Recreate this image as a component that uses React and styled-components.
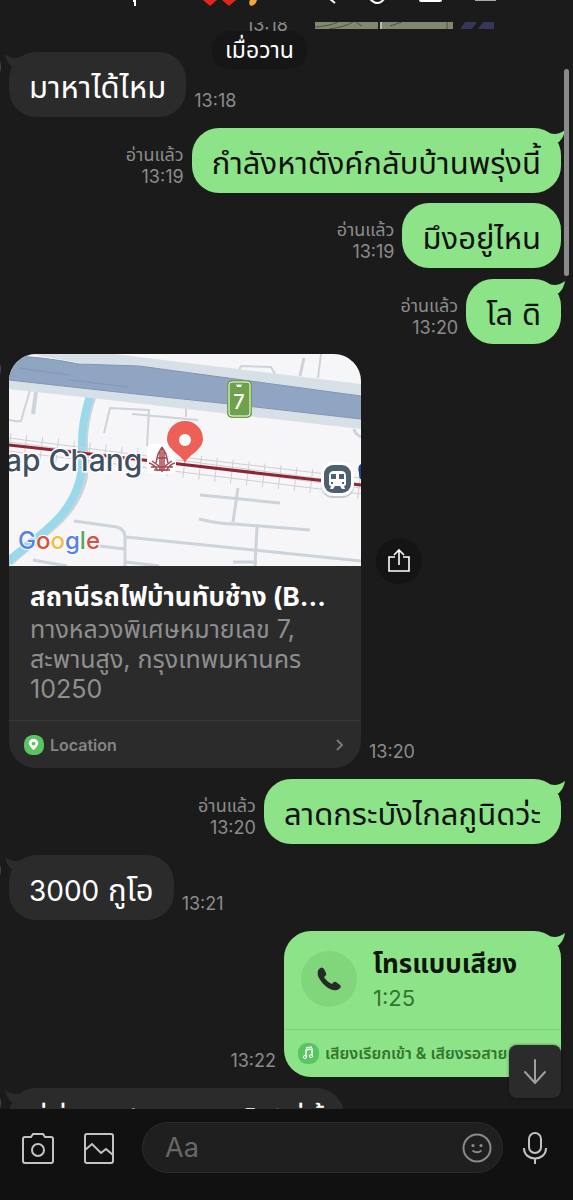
import styled, { createGlobalStyle } from "styled-components";

const GlobalStyle = createGlobalStyle`
  * {
    box-sizing: border-box;
  }
  body {
    margin: 0;
    background-color: #1b1b1b;
    font-family: Inter, "Noto Sans Thai", "Noto Sans", sans-serif;
  }
  button {
    border: none;
    padding: 0;
    background: none;
    color: inherit;
    font: inherit;
    cursor: pointer;
  }
`;

const Screen = styled.div`
  position: relative;
  display: flex;
  flex-direction: column;
  height: 100vh;
  overflow: hidden;
  background-color: #1b1b1b;
`;

const Header = styled.header`
  display: flex;
  align-items: flex-start;
  justify-content: space-between;
  height: 22px;
  padding: 0 76px 0 129px;
  background-color: #1b1b1b;
`;

const HeaderGroup = styled.div`
  display: flex;
  gap: ${(props) => props.$gap}px;
`;

const HeaderButton = styled.button`
  display: flex;
  height: 8px;
`;

const Chat = styled.main`
  flex: 1;
  overflow: hidden;
`;

const PastRow = styled.div`
  display: flex;
  justify-content: flex-end;
  gap: 27px;
  height: 19px;
  padding-right: 79px;
`;

const PastTime = styled.time`
  height: 12px;
  overflow: hidden;
  color: #8c8c8c;
  font-size: 18px;
  line-height: 6px;
`;

const DateChip = styled.div`
  position: absolute;
  top: 31px;
  left: 50%;
  transform: translateX(-50%);
  padding: 0 14px;
  margin-left: -27px;
  border-radius: 19px;
  background-color: #161616;
  color: #fff;
  font-size: 23px;
  line-height: 38px;
`;

const Row = styled.div`
  position: relative;
  display: flex;
  flex-direction: ${(props) => (props.$mine ? "row-reverse" : "row")};
  align-items: flex-end;
  gap: 8px;
  margin-top: ${(props) => (props.$tail ? 11 : 10)}px;
  padding: 0 12px 0 9px;
`;

const Avatar = styled.div`
  position: absolute;
  top: 0;
  left: -29px;
  width: 30px;
  height: 30px;
  border-radius: 50%;
  background-color: #41454f;
`;

const Bubble = styled.p`
  position: relative;
  flex: none;
  margin: 0;
  padding: 5px 20px 0;
  border-radius: 27px;
  background-color: ${(props) => (props.$mine ? "#8de387" : "#2b2b2b")};
  color: ${(props) => (props.$mine ? "#111" : "#fff")};
  font-size: 31px;
  line-height: 60px;
  white-space: nowrap;
`;

const Digits = styled.span`
  font-size: 28px;
  line-height: 1;
`;

const TailSvg = styled.svg`
  position: absolute;
  top: 1px;
  ${(props) => (props.$mine ? "right: -5px;" : "left: -5px;")}
  transform: ${(props) => (props.$mine ? "none" : "scaleX(-1)")};
`;

const Meta = styled.div`
  display: flex;
  flex-direction: column;
  align-items: ${(props) => (props.$mine ? "flex-end" : "flex-start")};
  padding-bottom: 5px;
  color: #8c8c8c;
  font-size: 18px;
  line-height: 22px;
`;

const LocationCard = styled.article`
  width: 352px;
  overflow: hidden;
  border-radius: 27px;
  background-color: #2b2b2b;
`;

const MapSvg = styled.svg`
  display: block;
  width: 100%;
  height: 212px;
`;

const LocationBody = styled.div`
  height: 154px;
  padding: 14px 21px 0;
`;

const LocationTitle = styled.h2`
  margin: 0;
  overflow: hidden;
  color: #fff;
  font-size: 26px;
  font-weight: 700;
  line-height: 34px;
  white-space: nowrap;
`;

const LocationText = styled.p`
  margin: 0;
  color: #8f8f8f;
  font-size: 25px;
  line-height: 30px;
`;

const LocationLink = styled.a`
  display: flex;
  align-items: center;
  gap: 6px;
  height: 48px;
  padding: 0 15px;
  border-top: 1px solid #383838;
  color: #858585;
  font-size: 16px;
  font-weight: 600;
  text-decoration: none;
`;

const LinkLabel = styled.span`
  flex: 1;
`;

const ShareButton = styled.button`
  display: flex;
  align-items: center;
  justify-content: center;
  width: 46px;
  height: 46px;
  margin-left: 7px;
  border-radius: 50%;
  background-color: #141414;
`;

const LocationSide = styled.div`
  display: flex;
  flex-direction: column;
  justify-content: space-between;
  align-self: stretch;
  padding-top: 184px;
`;

const CallCard = styled.article`
  position: relative;
  width: 277px;
  border-radius: 27px;
  background-color: #8de387;
`;

const CallBody = styled.div`
  display: flex;
  align-items: flex-start;
  gap: 16px;
  height: 98px;
  padding: 15px 17px 0;
`;

const CallIcon = styled.div`
  display: flex;
  align-items: center;
  justify-content: center;
  width: 56px;
  height: 56px;
  margin-top: 5px;
  border-radius: 50%;
  background-color: #81d67b;
`;

const CallTitle = styled.h2`
  margin: 0;
  color: #0d150c;
  font-size: 26px;
  font-weight: 700;
  line-height: 36px;
`;

const CallLength = styled.p`
  margin: 0;
  color: #33752e;
  font-size: 22px;
  line-height: 32px;
`;

const CallFooter = styled.a`
  display: flex;
  align-items: center;
  gap: 6px;
  height: 48px;
  padding-left: 14px;
  border-top: 1px solid #80d27a;
  color: #33752e;
  font-size: 16px;
  font-weight: 600;
  text-decoration: none;
  white-space: nowrap;
`;

const ScrollThumb = styled.div`
  position: absolute;
  top: 69px;
  right: 4px;
  width: 5px;
  height: 207px;
  border-radius: 3px;
  background-color: #8a8a8a;
`;

const DownButton = styled.button`
  position: absolute;
  right: 12px;
  bottom: 102px;
  display: flex;
  align-items: center;
  justify-content: center;
  width: 52px;
  height: 53px;
  border-radius: 8px;
  background-color: #2b2b2b;
  box-shadow: 0 0 3px rgba(0, 0, 0, 0.5);
`;

const Composer = styled.form`
  display: flex;
  align-items: flex-start;
  height: 91px;
  padding: 13px 25px 0 22px;
  background-color: #111;
`;

const ComposerButton = styled.button`
  display: flex;
  flex: none;
  align-items: center;
  height: 51px;
  margin-right: ${(props) => props.$space || 0}px;
`;

const InputBox = styled.div`
  display: flex;
  flex: 1;
  align-items: center;
  min-width: 0;
  height: 51px;
  margin-right: 19px;
  padding: 0 10px 0 22px;
  border: 1px solid #2c2c2c;
  border-radius: 26px;
  background-color: #1f1f1f;
`;

const MessageInput = styled.input`
  flex: 1;
  min-width: 0;
  padding: 0;
  border: none;
  outline: none;
  background: none;
  color: #fff;
  font-family: inherit;
  font-size: 27px;
  &::placeholder {
    color: #686868;
    opacity: 1;
  }
`;

const Tail = ({ mine }) => (
  <TailSvg $mine={mine} width="24" height="22" viewBox="0 0 24 22">
    <path
      d="M5 3 Q14 8 23 1 Q22 8 17 13 L10 16 Z"
      fill={mine ? "#8de387" : "#2b2b2b"}
    />
  </TailSvg>
);

const Message = ({ mine, tail, read, time, children }) => (
  <Row $mine={mine} $tail={tail}>
    {!mine && <Avatar />}
    <Bubble $mine={mine}>
      {children}
      {tail && <Tail mine={mine} />}
    </Bubble>
    {time && (
      <Meta $mine={mine}>
        {read && <span>อ่านแล้ว</span>}
        <time>{time}</time>
      </Meta>
    )}
  </Row>
);

const LocationMap = () => (
  <MapSvg viewBox="0 0 352 212" preserveAspectRatio="xMidYMid slice">
    <rect width="352" height="212" fill="#f6f5f7" />
    <g fill="none" stroke="#cdd3db" strokeWidth="3" strokeLinejoin="round">
      <path d="M21 36 L12 67 Q10 68 0 66" strokeWidth="2" />
      <path d="M27 38 L24 60" strokeWidth="4" />
      <path d="M95 79 L101 54 L140 56 L138 92 M123 60 L189 66 M177 53 V63" strokeWidth="2" />
      <path d="M230 16 L232 12 L262 13 L266 20 M312 0 L309 24" strokeWidth="2" />
      <path d="M295 4 L291 22" />
      <path d="M345 75 Q346 80 352 83" />
      <path d="M191 141 L271 149 M229 134 L224 168 M190 165 Q210 170 225 170 L301 176" />
      <path d="M65 167 L108 173 Q116 175 116 184 V212 M117 183 L352 207 M90 192 L116 195" />
      <path d="M248 173 L246 212 M224 208 H248 M24 206 L58 212 M117 208 L150 212" />
    </g>
    <path
      d="M86 0 L83 42 C68 86 78 100 74 125 C64 165 30 180 0 208"
      fill="none"
      stroke="#cdd3db"
      strokeWidth="9"
    />
    <path
      d="M86 0 L81 42 C67 86 77 100 71 125 C61 165 30 180 -4 210"
      fill="none"
      stroke="#99d9ea"
      strokeWidth="8"
    />
    <path d="M20 0 H105 L352 30 V44 L140 20 L60 7 Z" fill="#d8e0e7" />
    <path d="M0 25 L100 37 L352 64 V75 L100 46 L0 35 Z" fill="#d8e0e7" />
    <path
      d="M0 2 Q30 2 70 10 L130 12 L352 42 V65 L220 50 L90 36 L0 26 Z"
      fill="#90a5c1"
    />
    <path
      d="M0 2 Q30 2 70 10 L130 12 L352 42 M0 26 L90 36 L220 50 L352 65 M10 14 L60 21 M60 26 L120 33"
      fill="none"
      stroke="#7e97b7"
    />
    <g fill="none" stroke="#cfcfd3">
      <path d="M0 84 L352 130 M0 88 L352 134 M0 97 L352 140 M180 104 L352 124" />
      <path
        d="M0 91 L352 133"
        strokeWidth="24"
        strokeDasharray="1 15"
      />
    </g>
    <path d="M0 91 L170 110 L352 131" fill="none" stroke="#8d2532" strokeWidth="3" />
    <text
      x="-4"
      y="117"
      fill="#3f5161"
      stroke="#fff"
      strokeWidth="3"
      paintOrder="stroke"
      fontFamily="Inter"
      fontSize="30"
      fontWeight="500"
    >
      ap Chang
    </text>
    <rect x="138" y="90" width="29" height="30" rx="5" fill="#fff" />
    <g fill="none" stroke="#a5474c" strokeWidth="1.5">
      <path d="M153 93 L149 100 L147 109 M153 93 L157 100 L159 109 M151 97 V117 M155 97 V117 M153 94 V118 M149 104 H157" />
      <path d="M140 109 Q145 110 149 117 M143 107 L150 112 M166 109 Q161 110 157 117 M163 107 L156 112 M142 113 H164 M145 116 H161" />
    </g>
    <path
      d="M176 109 C173 101 158 96 158 85 A18 18 0 0 1 194 85 C194 96 179 101 176 109 Z"
      fill="#ec6058"
    />
    <circle cx="176" cy="86" r="6" fill="#fff" />
    <rect x="218" y="26" width="25" height="38" rx="5" fill="#6fa04a" />
    <rect x="220" y="28" width="21" height="34" rx="3" fill="#6fa04a" stroke="#fff" />
    <path d="M227 30 L229 31 L230 30 L231 31 L233 30 L232 33 H228 Z" fill="#fff" />
    <text
      x="230"
      y="55"
      fill="#fff"
      fontFamily="Inter"
      fontSize="20"
      fontWeight="500"
      textAnchor="middle"
    >
      7
    </text>
    <rect x="312" y="109" width="33" height="35" rx="12" fill="#c7c9cd" />
    <rect x="312" y="108" width="33" height="34" rx="12" fill="#fff" />
    <rect x="315" y="111" width="27" height="28" rx="9" fill="#4c6073" />
    <path
      d="M320 122 Q320 117 325 117 H332 Q337 117 337 122 V130 Q337 132 335 132 L336 135 H333 L331 132 H326 L324 135 H321 L322 132 Q320 132 320 130 Z"
      fill="#fff"
    />
    <path
      d="M322 120 H327 V125 H322 Z M330 120 H335 V125 H330 Z M322 128 h2 v2 h-2 Z M333 128 h2 v2 h-2 Z"
      fill="#4c6073"
    />
    <path d="M352 110 Q348 112 350 119 Q350 125 352 125 Z" fill="#24408e" />
    <text
      x="9"
      y="195"
      stroke="#fff"
      strokeWidth="2"
      paintOrder="stroke"
      fontFamily="Inter"
      fontSize="24"
      fontWeight="500"
    >
      <tspan fill="#5383ec">G</tspan>
      <tspan fill="#d85140">o</tspan>
      <tspan fill="#f1be42">o</tspan>
      <tspan fill="#5383ec">g</tspan>
      <tspan fill="#58a65c">l</tspan>
      <tspan fill="#d85140">e</tspan>
    </text>
  </MapSvg>
);

const App = () => {
  return (
    <Screen>
      <GlobalStyle />
      <Header>
        <HeaderGroup $gap={49}>
          <svg width="24" height="8" viewBox="0 0 24 8">
            <path d="M4 1 H6 V6" fill="none" stroke="#fff" strokeWidth="2" />
          </svg>
          <svg width="60" height="8" viewBox="0 0 60 8">
            <path d="M1 0 H15 L8 6 Z M20 0 H34 L27 6 Z" fill="#e0261b" />
            <path d="M48 0 H55 Q54 5 49 6 Q46 4 48 0 Z" fill="#f0a63a" />
          </svg>
        </HeaderGroup>
        <HeaderGroup $gap={33}>
          <HeaderButton aria-label="ค้นหา">
            <svg width="14" height="8" viewBox="0 0 14 8">
              <path d="M7 -1 L12 3" stroke="#fff" strokeWidth="2" />
            </svg>
          </HeaderButton>
          <HeaderButton aria-label="โทร">
            <svg width="16" height="8" viewBox="0 0 16 8">
              <path d="M0 -1 Q8 7 14 -1" fill="none" stroke="#fff" strokeWidth="2" />
            </svg>
          </HeaderButton>
          <HeaderButton aria-label="โน้ต">
            <svg width="23" height="8" viewBox="0 0 23 8">
              <path d="M0 -4 H23 V0 Q23 2 21 2 H2 Q0 2 0 0 Z" fill="#fff" />
            </svg>
          </HeaderButton>
          <HeaderButton aria-label="เมนู">
            <svg width="22" height="8" viewBox="0 0 22 8">
              <path d="M0 0 H21" stroke="#aaa" strokeWidth="2" />
            </svg>
          </HeaderButton>
        </HeaderGroup>
      </Header>

      <Chat>
        <PastRow>
          <PastTime>13:18</PastTime>
          <svg width="179" height="7" viewBox="0 0 179 7">
            <rect width="138" height="7" fill="#7f8970" />
            <path
              d="M0 5 Q14 4 23 0 M14 7 Q30 5 38 0 M41 0 L47 4 M75 4 L87 0 M132 0 V7"
              fill="none"
              stroke="#4c543f"
            />
            <path d="M64 0 V7" stroke="#222" strokeWidth="2" />
            <path d="M66 0 V7" stroke="#eee" />
            <path d="M150 0 H162 L157 7 H145 Z M168 0 H179 V7 H163 Z" fill="#35365a" />
          </svg>
        </PastRow>

        <Message tail time="13:18">
          มาหาได้ไหม
        </Message>
        <Message mine tail read time="13:19">
          กำลังหาตังค์กลับบ้านพรุ่งนี้
        </Message>
        <Message mine read time="13:19">
          มึงอยู่ไหน
        </Message>
        <Message mine tail read time="13:20">
          โล ดิ
        </Message>

        <Row>
          <Avatar />
          <LocationCard>
            <LocationMap />
            <LocationBody>
              <LocationTitle>สถานีรถไฟบ้านทับช้าง (B...</LocationTitle>
              <LocationText>
                ทางหลวงพิเศษหมายเลข 7,
                <br />
                สะพานสูง, กรุงเทพมหานคร
                <br />
                10250
              </LocationText>
            </LocationBody>
            <LocationLink href="#location">
              <svg width="20" height="20" viewBox="0 0 21 21">
                <rect width="21" height="21" rx="9" fill="#59c561" />
                <path
                  d="M10 16 Q5 11 5 9 A5 5 0 0 1 15 9 Q15 11 10 16 Z"
                  fill="#fff"
                />
                <circle cx="10" cy="9" r="2" fill="#59c561" />
              </svg>
              <LinkLabel>Location</LinkLabel>
              <svg width="14" height="14" viewBox="0 0 14 14">
                <path
                  d="M5 2 L10 7 L5 12"
                  fill="none"
                  stroke="#777"
                  strokeWidth="2"
                />
              </svg>
            </LocationLink>
          </LocationCard>
          <LocationSide>
            <ShareButton aria-label="แชร์">
              <svg width="24" height="26" viewBox="0 0 24 26">
                <path
                  d="M8 9 H2 V23 H22 V9 H16 M12 17 V2 M7 7 L12 2 L17 7"
                  fill="none"
                  stroke="#fff"
                  strokeWidth="1.6"
                />
              </svg>
            </ShareButton>
            <Meta>
              <time>13:20</time>
            </Meta>
          </LocationSide>
        </Row>

        <Message mine tail read time="13:20">
          ลาดกระบังไกลกูนิดว่ะ
        </Message>
        <Message tail time="13:21">
          <Digits>3000</Digits> กูโอ
        </Message>

        <Row $mine $tail>
          <CallCard>
            <CallBody>
              <CallIcon>
                <svg width="26" height="26" viewBox="0 0 26 26">
                  <path
                    d="M3 3 Q6 0 8 3 L10 7 Q11 9 8 11 Q11 16 16 18 Q18 15 20 16 L24 19 Q26 21 23 23 Q19 26 12 22 Q5 17 2 10 Q1 5 3 3 Z"
                    fill="#272b27"
                  />
                </svg>
              </CallIcon>
              <div>
                <CallTitle>โทรแบบเสียง</CallTitle>
                <CallLength>1:25</CallLength>
              </div>
            </CallBody>
            <CallFooter href="#ringtone">
              <svg width="21" height="21" viewBox="0 0 21 21">
                <rect width="21" height="21" rx="9" fill="#59c561" />
                <path
                  d="M8 14 V7 L14 6 V13 M8 5 L14 4"
                  fill="none"
                  stroke="#fff"
                  strokeWidth="1.4"
                />
                <circle cx="7" cy="14" r="1.6" fill="none" stroke="#fff" />
                <circle cx="13" cy="13" r="1.6" fill="none" stroke="#fff" />
              </svg>
              <span>เสียงเรียกเข้า &amp; เสียงรอสาย</span>
            </CallFooter>
            <Tail mine />
          </CallCard>
          <Meta $mine>
            <time>13:22</time>
          </Meta>
        </Row>

        <Message tail>ที่นี่บอกว่าจะมาหาก็ได้ที่นี้</Message>
      </Chat>

      <Composer>
        <ComposerButton type="button" aria-label="กล้อง" $space={30}>
          <svg width="32" height="32" viewBox="0 0 32 32">
            <path
              d="M3 5 H9 L11 2 H21 L23 5 H29 Q31 5 31 7 V29 Q31 31 29 31 H3 Q1 31 1 29 V7 Q1 5 3 5 Z"
              fill="none"
              stroke="#c4c4c4"
              strokeWidth="2"
            />
            <circle cx="16" cy="18" r="6" fill="none" stroke="#c4c4c4" strokeWidth="2" />
          </svg>
        </ComposerButton>
        <ComposerButton type="button" aria-label="รูปภาพ" $space={28}>
          <svg width="30" height="32" viewBox="0 0 30 32">
            <rect
              x="1"
              y="2"
              width="28"
              height="29"
              rx="2"
              fill="none"
              stroke="#c4c4c4"
              strokeWidth="2"
            />
            <path
              d="M1 18 L8 12 L17 21 L22 17 L29 23"
              fill="none"
              stroke="#c4c4c4"
              strokeWidth="2"
            />
          </svg>
        </ComposerButton>
        <InputBox>
          <MessageInput type="text" placeholder="Aa" aria-label="ข้อความ" />
          <ComposerButton type="button" aria-label="อีโมจิ">
            <svg width="30" height="30" viewBox="0 0 30 30">
              <circle cx="15" cy="15" r="13.5" fill="none" stroke="#8a8a8a" strokeWidth="2" />
              <circle cx="11" cy="12.5" r="1.6" fill="#8a8a8a" />
              <circle cx="19" cy="12.5" r="1.6" fill="#8a8a8a" />
              <path
                d="M10.500 17.500 Q15 21 19.500 17.500"
                fill="none"
                stroke="#8a8a8a"
                strokeWidth="2"
              />
            </svg>
          </ComposerButton>
        </InputBox>
        <ComposerButton type="button" aria-label="ไมโครโฟน">
          <svg width="26" height="34" viewBox="0 0 26 34">
            <rect
              x="7"
              y="2"
              width="12"
              height="20"
              rx="6"
              fill="none"
              stroke="#c4c4c4"
              strokeWidth="2"
            />
            <path
              d="M2 17 C2 31 24 31 24 17 M13 27 V33"
              fill="none"
              stroke="#c4c4c4"
              strokeWidth="2"
            />
          </svg>
        </ComposerButton>
      </Composer>

      <DateChip>เมื่อวาน</DateChip>
      <ScrollThumb />
      <DownButton aria-label="เลื่อนลง">
        <svg width="24" height="26" viewBox="0 0 24 26">
          <path
            d="M12 1 V24 M2 13 L12 24 L22 13"
            fill="none"
            stroke="#a0a0a0"
            strokeWidth="2"
            strokeLinecap="round"
          />
        </svg>
      </DownButton>
    </Screen>
  );
};

export default App;
